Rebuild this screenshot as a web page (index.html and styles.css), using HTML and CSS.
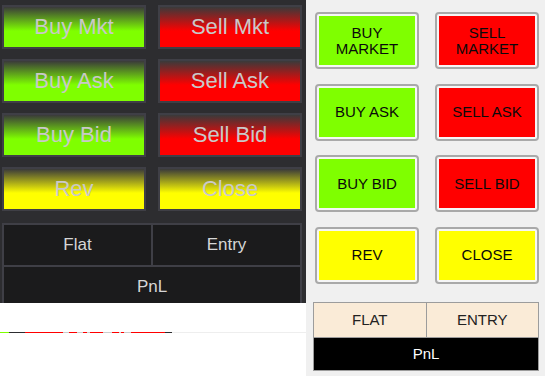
FILE: index.html
```html
<!DOCTYPE html>
<html lang="en">

<head>
  <meta charset="UTF-8">
  <title>Order Buttons</title>
  <link rel="stylesheet" href="styles.css">
</head>

<body>

  <div class="screen">

    <div class="left-col">
      <div class="dark-panel">
        <div class="dark-grid">
          <button class="dark-btn buy">Buy Mkt</button>
          <button class="dark-btn sell">Sell Mkt</button>
          <button class="dark-btn buy">Buy Ask</button>
          <button class="dark-btn sell">Sell Ask</button>
          <button class="dark-btn buy">Buy Bid</button>
          <button class="dark-btn sell">Sell Bid</button>
          <button class="dark-btn warn">Rev</button>
          <button class="dark-btn warn">Close</button>
        </div>

        <div class="dark-table">
          <div class="dark-cell">Flat</div>
          <div class="dark-cell">Entry</div>
          <div class="dark-cell wide">PnL</div>
        </div>
      </div>

      <div class="strip"></div>
    </div>

    <div class="light-panel">
      <div class="light-grid">
        <button class="win-btn"><span class="buy">BUY<br>MARKET</span></button>
        <button class="win-btn"><span class="sell">SELL<br>MARKET</span></button>
        <button class="win-btn"><span class="buy">BUY ASK</span></button>
        <button class="win-btn"><span class="sell">SELL ASK</span></button>
        <button class="win-btn"><span class="buy">BUY BID</span></button>
        <button class="win-btn"><span class="sell">SELL BID</span></button>
        <button class="win-btn"><span class="warn">REV</span></button>
        <button class="win-btn"><span class="warn">CLOSE</span></button>
      </div>

      <div class="light-table">
        <div class="light-cell">FLAT</div>
        <div class="light-cell">ENTRY</div>
        <div class="light-cell pnl">PnL</div>
      </div>
    </div>

  </div>

</body>

</html>
```

FILE: styles.css
```css
* {
  box-sizing: border-box;
  margin: 0;
  padding: 0;
  font-family: 'Liberation Sans', Arial, sans-serif;
}

body {
  background: #fff;
  width: 545px;
  height: 376px;
  overflow: hidden;
}

.screen {
  display: flex;
  height: 376px;
}

/* left: dark themed panel */

.left-col {
  width: 306px;
  flex-shrink: 0;
  background: #fff;
}

.dark-panel {
  height: 303px;
  overflow: hidden;
  background: #2d2d30;
  padding: 5px 4px 0 2px;
}

.dark-grid {
  display: grid;
  grid-template-columns: 144px 144px;
  grid-auto-rows: 44px;
  column-gap: 12px;
  row-gap: 10px;
}

.dark-btn {
  border: 2px solid #3f3f46;
  color: #c9c9c9;
  font-size: 22px;
  cursor: pointer;
}

.dark-btn.buy {
  background: linear-gradient(to bottom, #3a3a3a 0%, #7fff00 60%);
}

.dark-btn.sell {
  background: linear-gradient(to bottom, #3a3a3a 0%, #ff0000 60%);
}

.dark-btn.warn {
  background: linear-gradient(to bottom, #3a3a3a 0%, #ffff00 60%);
}

.dark-table {
  margin-top: 12px;
  display: grid;
  grid-template-columns: 1fr 1fr;
  grid-auto-rows: 40px;
  gap: 2px;
  background: #3f3f46;
  border: 2px solid #3f3f46;
}

.dark-cell {
  background: #1b1b1c;
  color: #d6d6d6;
  font-size: 17px;
  display: flex;
  align-items: center;
  justify-content: center;
}

.dark-cell.wide {
  grid-column: span 2;
}

.strip {
  margin-top: 29px;
  height: 1px;
  background: linear-gradient(to right,
      #7fff00 0 9px, #2d2d30 9px 25px, #f00 25px 63px, #ccc 63px 69px,
      #f00 69px 77px, #ccc 77px 83px, #f00 83px 87px, #ccc 87px 90px,
      #f00 90px 103px, #ccc 103px 112px, #f00 112px 119px, #ccc 119px 121px,
      #f00 121px 124px, #ccc 124px 131px, #f00 131px 165px, #2d2d30 165px 172px,
      #eee 172px);
}

/* right: light windows-style panel */

.light-panel {
  flex: 1;
  background: #f0f0f0;
  padding: 12px 6px 0 7px;
}

.light-grid {
  margin-left: 2px;
  display: grid;
  grid-template-columns: 104px 104px;
  grid-auto-rows: 57px;
  column-gap: 16px;
  row-gap: 14.5px;
}

.win-btn {
  display: flex;
  border: 2px solid #a9a9a9;
  border-radius: 4px;
  padding: 2px;
  background: #f6f6f6;
  cursor: pointer;
}

.win-btn span {
  flex: 1;
  display: flex;
  align-items: center;
  justify-content: center;
  text-align: center;
  color: #0a0a0a;
  font-size: 15px;
  line-height: 16px;
}

.win-btn .buy {
  background: #7fff00;
}

.win-btn .sell {
  background: #ff0000;
}

.win-btn .warn {
  background: #ffff00;
}

.light-table {
  margin-top: 18px;
  width: 226px;
  display: grid;
  grid-template-columns: 1fr 1fr;
  grid-template-rows: 34px 32px;
  gap: 1px;
  background: #9c9c9c;
  border: 1px solid #9c9c9c;
}

.light-cell {
  background: #faebd7;
  color: #222;
  font-size: 15px;
  display: flex;
  align-items: center;
  justify-content: center;
}

.light-cell.pnl {
  grid-column: span 2;
  background: #000;
  color: #fff;
}
```
